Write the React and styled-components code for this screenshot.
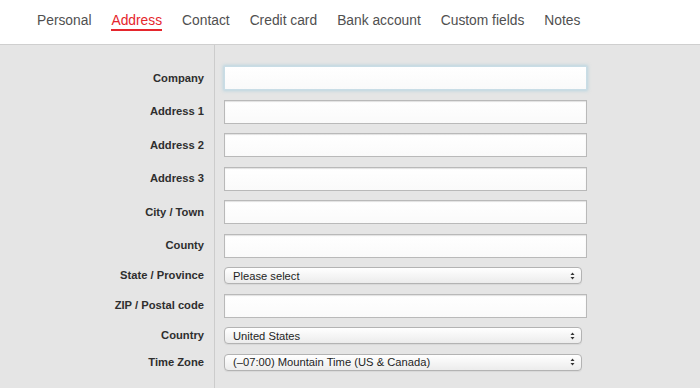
import styled, { createGlobalStyle } from "styled-components";

const GlobalStyle = createGlobalStyle`
  html, body {
    margin: 0;
    padding: 0;
    background: #e5e5e5;
    font-family: "Liberation Sans", Arial, sans-serif;
  }
  * { box-sizing: border-box; }
`;

const tabs = [
  "Personal",
  "Address",
  "Contact",
  "Credit card",
  "Bank account",
  "Custom fields",
  "Notes",
];

const fields = [
  { label: "Company", type: "input", focused: true },
  { label: "Address 1", type: "input" },
  { label: "Address 2", type: "input" },
  { label: "Address 3", type: "input" },
  { label: "City / Town", type: "input" },
  { label: "County", type: "input" },
  { label: "State / Province", type: "select", value: "Please select" },
  { label: "ZIP / Postal code", type: "input" },
  { label: "Country", type: "select", value: "United States" },
  { label: "Time Zone", type: "select", value: "(\u201307:00) Mountain Time (US & Canada)" },
];

export default function App() {
  return (
    <>
      <GlobalStyle />
      <Header>
        {tabs.map((t) => (
          <Tab key={t} $active={t === "Address"}>
            {t}
          </Tab>
        ))}
      </Header>
      <Main>
        <Labels>
          {fields.map((f) => (
            <Row key={f.label} $select={f.type === "select"}>
              <Label>{f.label}</Label>
            </Row>
          ))}
        </Labels>
        <Fields>
          {fields.map((f) => (
            <Row key={f.label} $select={f.type === "select"}>
              {f.type === "input" ? (
                <TextInput $focused={f.focused} />
              ) : (
                <Select>
                  <span>{f.value}</span>
                  <Arrows viewBox="0 0 6 10">
                    <path d="M3 0.5 L5.5 3.8 H0.5 Z" />
                    <path d="M3 9.5 L5.5 6.2 H0.5 Z" />
                  </Arrows>
                </Select>
              )}
            </Row>
          ))}
        </Fields>
      </Main>
    </>
  );
}

const Header = styled.div`
  height: 45px;
  background: #fff;
  border-bottom: 1px solid #cfcfcf;
  display: flex;
  align-items: flex-start;
  gap: 20px;
  padding: 13px 0 0 37px;
`;

const Tab = styled.div`
  font-size: 13.8px;
  line-height: 16px;
  color: ${(p) => (p.$active ? "#e5262d" : "#505050")};
  padding-bottom: 0;
  border-bottom: 2px solid ${(p) => (p.$active ? "#e5262d" : "transparent")};
`;

const Main = styled.div`
  display: flex;
  min-height: calc(100vh - 45px);
`;

const Labels = styled.div`
  width: 215px;
  border-right: 1px solid #cccccc;
  padding: 21px 10px 0 0;
  display: flex;
  flex-direction: column;
  gap: 9.5px;
`;

const Fields = styled.div`
  padding: 21px 0 0 9px;
  display: flex;
  flex-direction: column;
  gap: 9.5px;
`;

const Row = styled.div`
  height: ${(p) => (p.$select ? "17px" : "24px")};
  display: flex;
  align-items: center;
  justify-content: flex-end;
`;

const Label = styled.div`
  font-size: 11.2px;
  font-weight: 700;
  color: #2e2e2e;
  white-space: nowrap;
  margin-top: -1px;
`;

const TextInput = styled.div`
  width: 363px;
  height: 24px;
  background: linear-gradient(#ffffff, #fafafa);
  border: 1px solid ${(p) => (p.$focused ? "#c9dde6" : "#b9b9b9")};
  box-shadow: ${(p) =>
    p.$focused
      ? "0 0 3px 1px rgba(150, 200, 220, 0.55)"
      : "inset 0 1px 1px rgba(0, 0, 0, 0.12)"};
`;

const Select = styled.div`
  width: 358px;
  height: 17px;
  margin-right: 5px;
  border: 1px solid #b3b3b3;
  border-radius: 4px;
  background: linear-gradient(#ffffff, #ececec);
  box-shadow: 0 1px 1px rgba(0, 0, 0, 0.06);
  display: flex;
  align-items: center;
  justify-content: space-between;
  padding: 0 6px 0 8px;
  font-size: 11.2px;
  color: #1e1e1e;
  span {
    white-space: nowrap;
  }
`;

const Arrows = styled.svg`
  width: 5px;
  height: 8px;
  fill: #333;
`;
